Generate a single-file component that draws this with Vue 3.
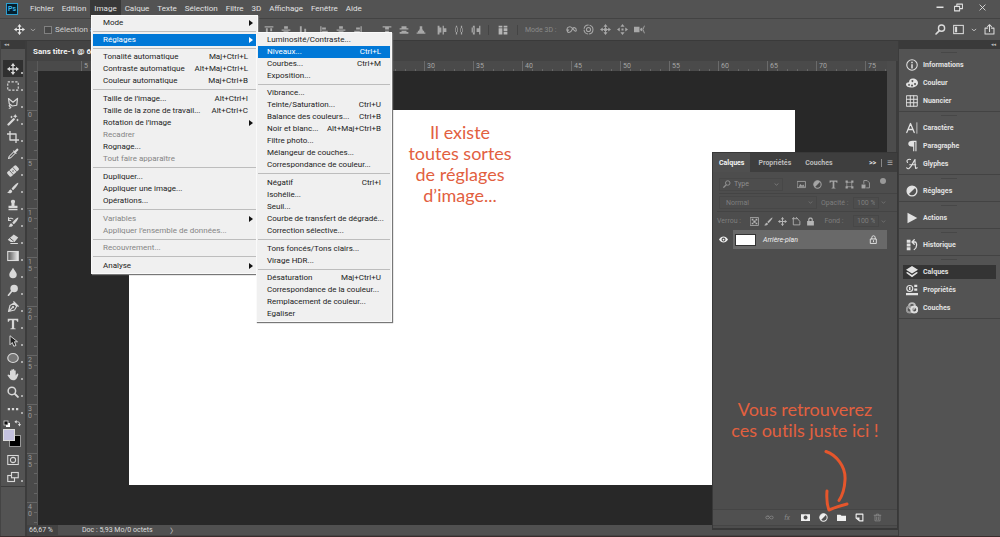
<script setup>
import { h } from 'vue'

const s = (d, w = 1.4) => `<path d="${d}" fill="none" stroke="currentColor" stroke-width="${w}" stroke-linecap="round" stroke-linejoin="round"/>`
const f = (d) => `<path d="${d}" fill="currentColor" fill-rule="evenodd"/>`

const glyphs = {
  move: s('M8 2v12M2 8h12', 1.8) + f('M8 0l3 4H5zM8 16l3-4H5zM0 8l4-3v6zM16 8l-4-3v6z'),
  marquee: '<rect x="1" y="2.500" width="14" height="11" fill="none" stroke="currentColor" stroke-width="1.500" stroke-dasharray="3 2"/>',
  lasso: s('M2 2l6 5 6-5-1 9-6 1-4-3zM6 11c-3-1-4 1-2 2s1 2-1 2', 1.6),
  wand: s('M2 14L9 7', 3) + f('M11 0l1 2 2 1-2 1-1 2-1-2-2-1 2-1zM14 6l.7 1.300L16 8l-1.300.7L14 10l-.7-1.300L12 8l1.300-.7zM6 2l.7 1.300L8 4l-1.300.7L6 6l-.7-1.300L4 4l1.300-.7z'),
  crop: s('M4 0v12h12M0 4h12v12', 1.8),
  dropper: s('M2 14l1-3 6-6 2 2-6 6z', 1.4) + f('M8 4l4 4 1-1-1-1 3-3c1-1-1-3-2-2l-3 3-1-1z'),
  heal: '<g transform="rotate(-42 8 8)"><rect x="0" y="4" width="16" height="8" rx="2" fill="currentColor"/><path d="M5 4v8M11 4v8" stroke="#555"/><path d="M7 7h2v2H7z" fill="#777"/></g>',
  brush: f('M15 1c-1-1-8 6-9 8l2 2c2-1 8-9 7-10zM5 10c-3 0-2 4-5 4 3 2 7 1 7-2z'),
  stamp: f('M8 1c-3 0-3.500 2.500-2 4.500V9H2v3h12V9h-4V5.500C11.500 3.500 11 1 8 1zM2 13h12v2H2z'),
  history: f('M15 2c-1-1-7 5-8 7l2 2c2-1 7-8 6-9zM6 10c-3 0-2 3-4 4 3 1 6 0 6-2z') + s('M2 6c0-3 4-4 6-2M2 2v4h3', 1.4),
  eraser: f('M9 2l6 4-5 6H5l-4-3z') + s('M5 14h9', 1.4) + '<path d="M4 7l5 4" stroke="#555" stroke-width="1.300"/>',
  gradient: '<defs><linearGradient id="g"><stop stop-color="#555"/><stop offset="1" stop-color="#eee"/></linearGradient></defs><rect x="1" y="2" width="14" height="12" fill="url(#g)" stroke="#ddd" stroke-width="1.500"/>',
  drop: f('M8 1c2 4 5 6 5 9a5 5 0 0 1-10 0c0-3 3-5 5-9z'),
  dodge: '<circle cx="9.500" cy="6" r="5" fill="currentColor"/>' + s('M6 10l-4 5', 2.2),
  pen: s('M2 14l2-8 5-3 4 4-3 5zM2 14l5-5M9 1l6 6', 1.500) + '<circle cx="8" cy="8" r="1.500" fill="currentColor"/>',
  type: f('M1 1h14v4h-1.500C13 3.500 12.500 3 11 3H9.500v10c0 .7.500 1 2 1v1h-7v-1c1.500 0 2-.3 2-1V3H5c-1.500 0-2 .5-2.500 2H1z'),
  arrow: '<path d="M4 1v12l3-3 2 5 3-1-2-5h4z" fill="#222" stroke="currentColor" stroke-width="1.300"/>',
  ellipse: '<ellipse cx="8" cy="8" rx="7" ry="6" fill="#777" stroke="currentColor" stroke-width="1.500"/>',
  hand: f('M4 8V3c0-1.300 1.700-1.300 1.700 0V1.500c0-1.500 2-1.500 2 0V1c0-1.300 2-1.300 2 0v1.500c0-1.300 1.900-1.300 1.900 0v6L13 6.500c1-1 2.500-.3 2 1-1 3-2.500 7.500-6.500 7.500C5 15 4 13 1 9c-1-1.500 1-2.500 2-1z'),
  zoom: '<circle cx="6.500" cy="6.500" r="5" fill="none" stroke="currentColor" stroke-width="2"/>' + s('M10.500 10.500l4 4', 2.6),
  dots: f('M1 6.500h3v3H1zM6.500 6.500h3v3h-3zM12 6.500h3v3h-3z'),
  reset: '<rect x="6" y="6" width="8" height="8" fill="#fff"/><rect x="2" y="2" width="8" height="8" fill="#111" stroke="#ddd" stroke-width="1.500"/>',
  swap: s('M4 4h5q4 0 4 5', 1.8) + f('M6 0v8L1 4zM9 9h7l-3.500 6z'),
  mask: '<rect x="1" y="2" width="14" height="12" fill="none" stroke="currentColor" stroke-width="1.400"/><circle cx="8" cy="8" r="3.500" fill="none" stroke="currentColor" stroke-width="1.400"/>',
  screen: '<rect x="1" y="6" width="9" height="8" fill="none" stroke="currentColor" stroke-width="1.500"/><rect x="6" y="2" width="9" height="7" fill="#555" stroke="currentColor" stroke-width="1.500"/>',
  alT: f('M1 2h14v2H1zM3 5h3v9H3zM10 5h3v5h-3z'),
  alM: f('M5 2h6v4H5zM1 7h14v2H1zM4 10h8v4H4z'),
  alB: f('M1 12h14v2H1zM3 2h3v9H3zM10 6h3v5h-3z'),
  alL: f('M2 2h2v12H2zM5 4h6v3H5zM5 9h9v3H5z'),
  alR: f('M12 2h2v12h-2zM5 4h6v3H5zM2 9h9v3H2z'),
  diT: f('M1 2h14v2H1zM5 4h6v3H5zM1 12h14v2H1zM5 9h6v3H5z'),
  diM: f('M4 2h8v3H4zM1 5h14v2H1zM4 9h8v2H4zM1 11h14v3H1z'),
  diB: f('M6 2h4v5H6zM5 7h6v2H5zM3 9h10v3H3zM1 12h14v2H1z'),
  diL: f('M1 1h3v14H1zM4 4h3v8H4zM9 1h2v14H9zM11 5h4v6h-4z'),
  diC: f('M3 1h2v14H3zM2 4h4v7H2zM11 1h2v14h-2zM10 5h4v6h-4z'),
  diR: f('M3 1h3v14H3zM1 4h3v8H1zM13 1h2v14h-2zM9 5h4v6H9z'),
  auto: f('M1 1h6v3H1zM1 5h6v10H1zM9 1h6v3H9zM9 5h6v5H9zM9 11h6v4H9z'),
  orbit: s('M2 9c-2-4 4-7 7-3s6 6 6 3-4-6-6-1-6 5-7 3', 1.500) + f('M0 8l5 0-3 4z'),
  roll: '<circle cx="8" cy="8" r="6.500" fill="none" stroke="currentColor" stroke-width="1.500" stroke-dasharray="9 1.500"/><circle cx="8" cy="8" r="3" fill="none" stroke="currentColor" stroke-width="1.500"/>',
  pan: f('M8 0l3 4H5zM8 16l3-4H5zM0 8l4-3v6zM16 8l-4-3v6zM6 6h4v4H6z') + s('M8 3v10M3 8h10', 1.3),
  slide: f('M8 0l3 4H5zM8 16l3-4H5zM0 8l4-3v6zM16 8l-4-3v6zM6.500 6.500h3v3h-3z'),
  cam: f('M0 4h8v8H0zM9 7l3-2v6L9 9z') + s('M15 3l-2 5 2 5', 1.3),
  search: '<circle cx="9.500" cy="6" r="4.500" fill="none" stroke="currentColor" stroke-width="2"/>' + s('M6 10l-4.500 4.500', 2.4),
  space: '<rect x="1" y="2" width="14" height="12" fill="none" stroke="currentColor" stroke-width="1.500"/>' + f('M3 4h3v8H3z'),
  chev: s('M3 6l5 4 5-4', 2),
  share: s('M5 6H1.500v8.500h13V6H11M8 11V1.500M5 4l3-3 3 3', 1.5),
  min: f('M1 7h14v3H1z'),
  restore: s('M1 6h9v8H1zM5 6V2h10v8h-5', 1.8),
  close: s('M2 2l12 12M14 2L2 14', 2),
  info: '<circle cx="8" cy="8" r="7" fill="none" stroke="currentColor" stroke-width="1.400"/>' + f('M7 3.500h2v2H7zM7 7h2v5.500H7z'),
  palette: f('M9 2c4 0 7 2.500 7 6s-4 6-9 6c-4 0-7-1.500-7-4 0-2 2-3 4-3 0-3 2-5 5-5zM4 9a1 1.500 0 1 0 .1 0zM8 10a1.300 1.300 0 1 0 .1 0zM12 8a1.300 1.300 0 1 0 .1 0zM8.500 4a1.300 1.300 0 1 0 .1 0z'),
  swatch: s('M1 1h14v14H1zM1 5.700h14M1 10.300h14M5.700 1v14M10.300 1v14', 1.3),
  char: s('M1 14L6 2l5 12M3 10h6', 1.7) + s('M14.500 1v14', 1),
  para: f('M14 1v14h-1.500V2.500H11V15H9.500V9C5 9 3 7.500 3 5s2-4 6-4z'),
  glyph: s('M2 6c-2-3 1-5 4-4M4 14C8 11 9 6 12 2c0 5 0 9 1 12l2-1M5 9h8M1 13c1 2 3 1 3 1', 1.5),
  adjust: '<circle cx="8" cy="8" r="6.500" fill="none" stroke="currentColor" stroke-width="1.800"/>' + f('M12.800 3.200A6.800 6.800 0 0 0 3.200 12.800z'),
  play: f('M2 1l13 7-13 7z'),
  hist: f('M1 1h5v4H1zM1 6h5v4H1zM1 11h5v4H1z') + s('M9 4h3c3 0 3 8-1 10M11 1L8 4l3 3', 1.7),
  layers: f('M8 0l8 5-8 5-8-5zM0 9l2-1 6 4 6-4 2 1-8 6z'),
  props: '<circle cx="5" cy="6" r="4" fill="none" stroke="currentColor" stroke-width="1.500"/>' + f('M4 4h2v4H4zM11 1h4v3h-4zM11 6h4v3h-4zM0 12h16v3H0z'),
  channels: '<circle cx="8" cy="5.500" r="4" fill="none" stroke="#bbb" stroke-width="2.600"/><circle cx="5" cy="10" r="4" fill="none" stroke="#999" stroke-width="2.600"/><circle cx="11" cy="10" r="4" fill="none" stroke="#ddd" stroke-width="2.600"/>',
  image: s('M1 2.500h14v11H1z', 1.5) + f('M3 12l3-5 3 3 2-2 3 4z'),
  shape: s('M4 4h8v8H4z', 1.3) + f('M1 1h4v4H1zM11 1h4v4h-4zM1 11h4v4H1zM11 11h4v4h-4z'),
  smart: s('M5 6V1h6l4 4v9h-5', 1.5) + f('M1 8h7v7H1z'),
  checker: s('M1 1h14v14H1z', 1.4) + f('M3 3h3v3H3zM10 3h3v3h-3zM6 6h4v4H6zM3 10h3v3H3zM10 10h3v3h-3z'),
  board: s('M3 3h7l4 5v6H3zM0 3h3V0M10 3l-3-3', 1.5),
  lock: f('M2 7h12v8H2zM4 7V4c0-4 8-4 8 0v3h-2V4.500c0-2-4-2-4 0V7z'),
  lockO: s('M3 7h10v8H3zM5 7V4c0-3.500 6-3.500 6 0v3M8 10v2', 1.5),
  eye: f('M0 8c4-7 12-7 16 0-4 7-12 7-16 0zM8 4.500a3.500 3.500 0 1 0 .1 0zM8 6.500a1.500 1.500 0 1 0 .1 0z'),
  link: s('M7 5.500H4a2.500 2.500 0 0 0 0 5h1c3 0 3-5 6-5h1a2.500 2.500 0 0 1 0 5h-1c-3 0-3-5-6-5', 1.4),
  lmask: f('M0 2h16v12H0zM8 4.500a3.500 3.500 0 1 0 .1 0z'),
  folder: f('M0 3h6l2 2h8v9H0z'),
  page: s('M2 2h12v12H8L2 9z', 2) + f('M2 8h6v6z'),
  trash: s('M2 4h12M6 4V2h4v2M3.500 4v10h9V4M6.500 7v5M9.500 7v5', 1.4)
}
const Icon = (p) =>
  h('svg', { viewBox: '0 0 16 16', width: p.size || 12, height: p.size || 12, 'aria-hidden': 'true', innerHTML: glyphs[p.name] })

const menus = ['Fichier', 'Edition', 'Image', 'Calque', 'Texte', 'Sélection', 'Filtre', '3D', 'Affichage', 'Fenêtre', 'Aide']

const imageMenu = [
  { t: 'Mode', sub: true }, { sep: true, tight: true },
  { t: 'Réglages', sub: true, on: true }, { sep: true, tight: true },
  { t: 'Tonalité automatique', k: 'Maj+Ctrl+L' },
  { t: 'Contraste automatique', k: 'Alt+Maj+Ctrl+L' },
  { t: 'Couleur automatique', k: 'Maj+Ctrl+B' }, { sep: true },
  { t: 'Taille de l’image...', k: 'Alt+Ctrl+I' },
  { t: 'Taille de la zone de travail...', k: 'Alt+Ctrl+C' },
  { t: 'Rotation de l’image', sub: true },
  { t: 'Recadrer', off: true },
  { t: 'Rognage...' },
  { t: 'Tout faire apparaître', off: true }, { sep: true },
  { t: 'Dupliquer...' }, { t: 'Appliquer une image...' }, { t: 'Opérations...' }, { sep: true },
  { t: 'Variables', sub: true, off: true },
  { t: 'Appliquer l’ensemble de données...', off: true }, { sep: true, tight: true },
  { t: 'Recouvrement...', off: true }, { sep: true },
  { t: 'Analyse', sub: true }
]
const adjustMenu = [
  { t: 'Luminosité/Contraste...' }, { t: 'Niveaux...', k: 'Ctrl+L', on: true },
  { t: 'Courbes...', k: 'Ctrl+M' }, { t: 'Exposition...' }, { sep: true, tight: true },
  { t: 'Vibrance...' }, { t: 'Teinte/Saturation...', k: 'Ctrl+U' },
  { t: 'Balance des couleurs...', k: 'Ctrl+B' }, { t: 'Noir et blanc...', k: 'Alt+Maj+Ctrl+B' },
  { t: 'Filtre photo...' }, { t: 'Mélangeur de couches...' }, { t: 'Correspondance de couleur...' }, { sep: true },
  { t: 'Négatif', k: 'Ctrl+I' }, { t: 'Isohélie...' }, { t: 'Seuil...' },
  { t: 'Courbe de transfert de dégradé...' }, { t: 'Correction sélective...' }, { sep: true },
  { t: 'Tons foncés/Tons clairs...' }, { t: 'Virage HDR...' }, { sep: true, tight: true },
  { t: 'Désaturation', k: 'Maj+Ctrl+U' }, { t: 'Correspondance de la couleur...' },
  { t: 'Remplacement de couleur...' }, { t: 'Egaliser' }
]
const openMenus = [
  { id: 'image', label: 'Image', items: imageMenu },
  { id: 'adjust', label: 'Réglages', items: adjustMenu }
]

const tools = [
  ['move', 'Déplacement'], ['marquee', 'Rectangle de sélection'], ['lasso', 'Lasso'], ['wand', 'Baguette magique'],
  ['crop', 'Recadrage'], ['dropper', 'Pipette'], ['heal', 'Correcteur'], ['brush', 'Pinceau'], ['stamp', 'Tampon'],
  ['history', 'Forme d’historique'], ['eraser', 'Gomme'], ['gradient', 'Dégradé'], ['drop', 'Goutte d’eau'],
  ['dodge', 'Densité'], ['pen', 'Plume'], ['type', 'Texte'], ['arrow', 'Sélection de tracé'], ['ellipse', 'Ellipse'],
  ['hand', 'Main'], ['zoom', 'Zoom'], ['dots', 'Modifier la barre d’outils']
]
const aligns = [['alT', 'alM', 'alB'], ['alL', 'alM', 'alR'], ['diT', 'diM', 'diB'], ['diL', 'diC', 'diR']]
const modes3d = ['orbit', 'roll', 'pan', 'slide', 'cam']

const rulerX = ['5', '', '', '', '', '', '', '30', '35', '40', '45', '50', '55', '60', '65', '70', '75']
const rulerY = ['', '0', '5', '10', '15', '20', '25', '30', '35', '40']

const dock = [
  [['info', 'Informations'], ['palette', 'Couleur'], ['swatch', 'Nuancier']],
  [['char', 'Caractère'], ['para', 'Paragraphe'], ['glyph', 'Glyphes']],
  [['adjust', 'Réglages']],
  [['play', 'Actions']],
  [['hist', 'Historique']],
  [['layers', 'Calques'], ['props', 'Propriétés'], ['channels', 'Couches']]
]
const filters = ['image', 'adjust', 'type', 'shape', 'smart']
const locks = ['checker', 'brush', 'move', 'board', 'lock']
const footer = [['link', 1], ['fx', 1], ['lmask'], ['adjust'], ['folder'], ['page'], ['trash', 1]]
</script>

<template>
  <div class="app">
    <header class="menubar">
      <span class="logo">Ps</span>
      <nav class="menus">
        <button v-for="m in menus" :key="m" class="menu-btn" :class="{ open: m === 'Image' }">{{ m }}</button>
      </nav>
      <div class="window">
        <button aria-label="Réduire"><Icon name="min" :size="8" /></button>
        <button aria-label="Restaurer"><Icon name="restore" :size="9" /></button>
        <button class="quit" aria-label="Fermer"><Icon name="close" :size="7" /></button>
      </div>
    </header>

    <div class="options">
      <Icon name="move" :size="11" />
      <Icon name="chev" :size="6" />
      <label class="auto-select"><input type="checkbox" />Sélection auto</label>
      <div v-for="(g, i) in aligns" :key="i" class="align" :class="{ wide: i === 2 }">
        <button v-for="(a, j) in g" :key="j" :aria-label="'Alignement ' + (i * 3 + j + 1)"><Icon :name="a" :size="10" /></button>
      </div>
      <div class="distribute"><button aria-label="Alignement automatique"><Icon name="auto" :size="10" /></button></div>
      <span class="mode3d">Mode 3D :</span>
      <div class="align">
        <button v-for="m in modes3d" :key="m" :aria-label="'3D ' + m"><Icon :name="m" :size="11" /></button>
      </div>
      <div class="options-end">
        <button aria-label="Rechercher"><Icon name="search" :size="11" /></button>
        <button aria-label="Espace de travail"><Icon name="space" :size="11" /></button>
        <Icon name="chev" :size="6" />
        <button aria-label="Partager"><Icon name="share" :size="11" /></button>
      </div>
    </div>

    <main class="work">
      <aside class="toolbox">
        <div class="fold">◂◂</div>
        <div class="tool-list">
          <button v-for="t in tools" :key="t[0]" class="tool" :class="{ on: t[0] === 'move' }" :aria-label="t[1]">
            <Icon :name="t[0]" :size="12" />
          </button>
          <div class="mini"><Icon name="reset" :size="8" /><Icon name="swap" :size="7" /></div>
          <div class="colors"><span class="bg"></span><span class="fg"></span></div>
          <button class="tool plain" aria-label="Mode masque"><Icon name="mask" :size="12" /></button>
          <button class="tool" aria-label="Mode d’écran"><Icon name="screen" :size="12" /></button>
        </div>
      </aside>

      <section class="document">
        <div class="tabs"><span>Sans titre-1 @ 66</span></div>
        <div class="view">
          <div class="ruler-y">
            <div v-for="(n, i) in rulerY" :key="i" class="tick-y"><span v-for="(c, j) in n" :key="j">{{ c }}</span></div>
          </div>
          <div class="center">
            <div class="ruler-x">
              <div v-for="(n, i) in rulerX" :key="i" class="tick-x">{{ n }}</div>
            </div>
            <div class="canvas"><div class="artboard"></div></div>
          </div>
          <div class="scroll"></div>
        </div>
        <footer class="status">
          <span class="pct">66,67 %</span>
          <span class="doc">Doc : 5,93 Mo/0 octets</span>
          <span class="more">〉</span>
        </footer>
      </section>

      <aside class="dock">
        <div class="fold right">◂◂</div>
        <div v-for="(g, i) in dock" :key="i" class="group">
          <button v-for="d in g" :key="d[1]" class="entry" :class="{ on: d[1] === 'Calques' }">
            <Icon :name="d[0]" :size="12" /><span>{{ d[1] }}</span>
          </button>
        </div>
      </aside>
    </main>

    <ul v-for="m in openMenus" :key="m.id" class="dropdown" :class="m.id" :aria-label="m.label">
      <li v-for="(it, i) in m.items" :key="i" :class="{ sep: it.sep, tight: it.tight }">
        <button v-if="!it.sep" class="item" :class="{ on: it.on, off: it.off }">
          <span>{{ it.t }}</span>
          <span v-if="it.k" class="key">{{ it.k }}</span>
          <span v-if="it.sub" class="caret"></span>
        </button>
      </li>
    </ul>

    <section class="panel">
      <div class="panel-tabs">
        <button class="on">Calques</button><button>Propriétés</button><button>Couches</button>
        <span class="panel-more">&gt;&gt;<i></i><b>≡</b></span>
      </div>
      <div class="prow first">
        <span class="type-box"><Icon name="search" :size="8" />
          <select aria-label="Filtre"><option>Type</option></select><Icon name="chev" :size="5" />
        </span>
        <span class="filters"><Icon v-for="x in filters" :key="x" :name="x" :size="9" /></span>
        <span class="dot"></span>
      </div>
      <div class="prow dim">
        <span class="blend-box"><select aria-label="Mode de fusion"><option>Normal</option></select><Icon name="chev" :size="5" /></span>
        <label for="opacity">Opacité :</label><input id="opacity" value="100 %" /><Icon name="chev" :size="5" />
      </div>
      <div class="prow dim last">
        <span>Verrou :</span>
        <span class="locks"><Icon v-for="x in locks" :key="x" :name="x" :size="9" /></span>
        <label for="fill">Fond :</label><input id="fill" value="100 %" /><Icon name="chev" :size="5" />
      </div>
      <div class="layer">
        <Icon name="eye" :size="9" />
        <div class="layer-body"><span class="thumb"></span><em>Arrière-plan</em><Icon name="lockO" :size="9" /></div>
      </div>
      <p class="note">Vous retrouverez<br />ces outils juste ici !</p>
      <div class="panel-foot">
        <button v-for="x in footer" :key="x[0]" :class="{ faint: x[1] }" :aria-label="x[0]">
          <i v-if="x[0] === 'fx'">fx</i><Icon v-else :name="x[0]" :size="9" />
        </button>
      </div>
    </section>

    <p class="callout">Il existe<br />toutes sortes<br />de réglages<br />d’image...</p>
    <svg class="pointer" viewBox="0 0 30 66" width="30" height="66" aria-hidden="true">
      <path d="M4 3.500C14 7 24 18 23 32c-.5 10-3 16-6 20.500M5 43c-.5 7 0 14 2 19 6-2.500 12-4.500 18-6" fill="none" stroke="#e5562c" stroke-width="3" stroke-linecap="round" stroke-linejoin="round" />
    </svg>
  </div>
</template>

<style>
body { margin: 0; background: #282828; }
</style>

<style scoped>
* { box-sizing: border-box; }
.app { position: relative; display: flex; flex-direction: column; min-height: 100vh; overflow: hidden; background: #535353; color: #e2e2e2; font: 8px/12px Roboto, "Open Sans", sans-serif; border-bottom: 1px solid #3a2c2c; }
button { appearance: none; border: 0; padding: 0; margin: 0; background: none; color: inherit; font: inherit; display: flex; align-items: center; justify-content: center; white-space: nowrap; }
svg { display: block; flex: none; }

.menubar { display: flex; height: 19px; padding-left: 6px; border-bottom: 1px solid #434343; }
.logo { width: 12px; height: 12px; margin-top: 3px; border: 1px solid #2c9fd0; background: #06202e; color: #3bb8ea; font-size: 7px; line-height: 10px; text-align: center; font-weight: 600; }
.menus { display: flex; margin-left: 8px; height: 17px; }
.menu-btn { padding: 0 4px; }
.menu-btn.open { background: #383838; }
.window { display: flex; gap: 10px; margin-left: auto; padding: 0 14px 4px 0; }
.quit { margin-left: 6px; }

.options { display: flex; align-items: center; height: 22px; padding: 0 5px 0 14px; border-bottom: 1px solid #3a3a3a; color: #b5b5b5; }
.options > svg:first-child { color: #e6e6e6; }
.options > svg + svg { margin: 0 8px 0 5px; }
.auto-select { display: flex; align-items: center; gap: 3px; width: 216px; color: #d0d0d0; }
.auto-select input { appearance: none; width: 8px; height: 8px; margin: 0; border: 1px solid #808080; background: #474747; }
.align { display: flex; margin-right: 4px; color: #a8a8a8; }
.align button { width: 17px; }
.align.wide { margin-left: 8px; }
.distribute { display: flex; justify-content: center; width: 30px; border: solid #444; border-width: 0 1px; }
.mode3d { width: 45px; padding-left: 7px; color: #8a8a8a; font-size: 7px; }
.options-end { display: flex; align-items: center; gap: 7px; margin-left: auto; color: #dcdcdc; }

.work { display: flex; flex: 1; }
.toolbox { width: 27px; border-right: 2px solid #3c3c3c; border-left: 1px solid #444; }
.fold { height: 8px; padding-left: 3px; background: #3a3a3a; color: #bbb; font: 5px/7px "DejaVu Sans", sans-serif; }
.fold.right { text-align: right; padding-right: 4px; }
.tool-list { padding: 11px 2px 1px; border-bottom: 1px solid #3c3c3c; }
.tool { position: relative; width: 20px; height: 17px; color: #d8d8d8; }
.tool.on { background: #303030; }
.tool::after { content: ""; position: absolute; right: 0; bottom: 3px; width: 2px; height: 2px; background: #aaa; }
.tool.plain::after { display: none; }
.mini { display: flex; justify-content: space-between; padding: 3px 2px 0 0; height: 12px; color: #ddd; }
.colors { position: relative; height: 22px; }
.colors span { position: absolute; width: 12px; height: 12px; border: 1px solid #ddd; }
.colors .fg { left: 0; top: 0; background: #c3c1e0; }
.colors .bg { left: 6px; top: 6px; background: #000; border-color: #999; }

.document { display: flex; flex-direction: column; flex: 1; min-width: 0; }
.tabs { height: 20px; padding: 5px 0 0 6px; background: #434343; color: #f2f2f2; font-weight: 700; line-height: 11px; white-space: nowrap; }
.view { display: flex; flex: 1; min-height: 0; }
.ruler-y { width: 11px; height: 464px; overflow: hidden; background: #4a4a4a; border-right: 1px solid #5a5a5a; color: #9c9c9c; font-size: 7px; line-height: 7px; }
.tick-y { height: 49px; padding: 1px 0 0 1px; border-top: 1px solid #666; background: repeating-linear-gradient(#4a4a4a 0 9px, #666 9px 10px) right / 3px 100% no-repeat; }
.tick-y:first-child { border-top-color: transparent; }
.tick-y span { display: block; }
.center { display: flex; flex-direction: column; flex: 1; min-width: 0; }
.ruler-x { display: flex; height: 10px; padding-left: 43px; overflow: hidden; background: #4a4a4a; color: #a5a5a5; font-size: 7px; line-height: 10px; }
.tick-x { flex: none; width: 49px; padding-left: 2px; border-left: 1px solid #6a6a6a; background: repeating-linear-gradient(90deg, transparent 0 9px, #666 9px 10px) bottom / 100% 2px no-repeat; }
.canvas { display: flex; flex: 1; padding: 39px 92px 40px 91px; background: #282828; }
.artboard { flex: 1; background: #fff; }
.scroll { width: 11px; background: #4c4c4c; border-right: 2px solid #3c3c3c; }
.status { display: flex; height: 11px; background: #505050; color: #dcdcdc; font-size: 7px; line-height: 10px; border-bottom: 1px solid #444; }
.pct { width: 31px; padding-left: 2px; background: #434343; }
.doc { width: 108px; padding-left: 24px; }
.more { padding-left: 4px; font-family: "Noto Sans CJK JP", sans-serif; }

.dock { width: 102px; border-left: 1px solid #3c3c3c; font-weight: 700; font-size: 7px; }
.group { position: relative; padding: 7px 4px 1px; border-bottom: 1px solid #434343; }
.group::before { content: ""; position: absolute; left: 42px; top: 3px; width: 16px; height: 1px; background: #474747; }
.entry { width: 100%; height: 18px; justify-content: flex-start; gap: 5px; padding-left: 3px; }
.entry span { flex: none; }
.entry.on { background: linear-gradient(#343434, #343434) center / 100% 14px no-repeat; }

.dropdown { position: absolute; margin: 0; padding: 1px; list-style: none; background: #f0f0f0; border: 1px solid #fafafa; color: #1c1c1c; box-shadow: 1px 1px 1px #777; }
.dropdown.image { left: 91px; top: 15px; width: 167px; }
.dropdown.adjust { left: 256px; top: 32px; width: 136px; }
.item { width: 100%; height: 12px; padding: 0 8px 0 10px; justify-content: space-between; }
.adjust .item { padding: 0 9px; }
.item.on { background: #0078d7; color: #fff; }
.item.off { color: #858585; }
.caret { width: 0; margin-right: -5px; border: 3px solid transparent; border-left: 4px solid #111; border-right: 0; }
.on .caret { border-left-color: #fff; }
.sep { height: 6px; padding-top: 2px; }
.sep::before { content: ""; display: block; border-top: 1px solid #bdbdbd; }
.sep.tight { height: 5px; }

.panel { position: absolute; left: 712px; top: 152px; width: 186px; height: 378px; display: flex; flex-direction: column; background: #4d4d4d; border: 1px solid #383838; border-bottom-width: 2px; font-size: 7px; }
.panel-tabs { display: flex; height: 19px; background: #3e3e3e; font-weight: 700; color: #bcbcbc; }
.panel-tabs button { padding: 0 6px; margin-right: 2px; }
.panel-tabs .on { background: #4f4f4f; color: #f4f4f4; }
.panel-more { display: flex; align-items: center; gap: 5px; margin-left: auto; padding-right: 4px; color: #ddd; }
.panel-more i { width: 1px; height: 8px; background: #888; }
.panel-more b { font-size: 10px; color: #aaa; }
.prow { display: flex; align-items: center; height: 18px; margin-left: 6px; padding-right: 11px; color: #a5a5a5; white-space: nowrap; }
.prow + .prow { border-top: 1px solid #444; }
.prow.first { height: 21px; padding-top: 3px; }
.prow.dim { color: #7e7e7e; }
.prow.last { height: 19px; margin-left: 4px; }
.prow select, .prow input { appearance: none; flex: 1; min-width: 0; padding: 0 3px; border: 0; background: none; color: inherit; font: inherit; opacity: 1; }
.type-box, .blend-box { display: flex; align-items: center; height: 13px; padding: 0 3px; border: 1px solid #474747; }
.type-box { width: 64px; color: #909090; }
.blend-box { width: 98px; margin-right: 4px; }
.filters { display: flex; gap: 7px; margin-left: 14px; }
.dot { width: 6px; height: 6px; margin: -6px 0 0 auto; border-radius: 3px; background: #999; }
.prow input { flex: none; width: 26px; height: 12px; margin: 0 2px 0 auto; border: 1px solid #474747; }
.locks { display: flex; gap: 5px; margin: 0 auto 0 9px; color: #b5b5b5; }
.layer { display: flex; align-items: center; height: 19px; padding: 0 10px 0 6px; color: #f0f0f0; }
.layer-body { display: flex; align-items: center; gap: 7px; flex: 1; height: 19px; margin-left: 5px; padding: 0 9px 0 2px; background: #696969; }
.layer-body svg { margin-left: auto; }
.thumb { width: 21px; height: 12px; background: #fff; border: 1px solid #333; }
.note, .callout { margin: 0; color: #e2603f; font: 18px/21px Lato, "Open Sans", sans-serif; font-variant-ligatures: none; text-align: center; white-space: nowrap; }
.note { margin-top: auto; padding-bottom: 68px; }
.panel-foot { display: flex; justify-content: flex-end; gap: 6px; height: 17px; margin-bottom: 2px; padding-right: 14px; border-top: 1px solid #454545; border-bottom: 1px solid #454545; background: #505050; }
.panel-foot button { width: 12px; flex: none; color: #f0f0f0; }
.panel-foot .faint { color: #8a8a8a; }
.callout { position: absolute; left: 400px; top: 122px; width: 120px; }
.pointer { position: absolute; left: 822px; top: 448px; }
</style>
